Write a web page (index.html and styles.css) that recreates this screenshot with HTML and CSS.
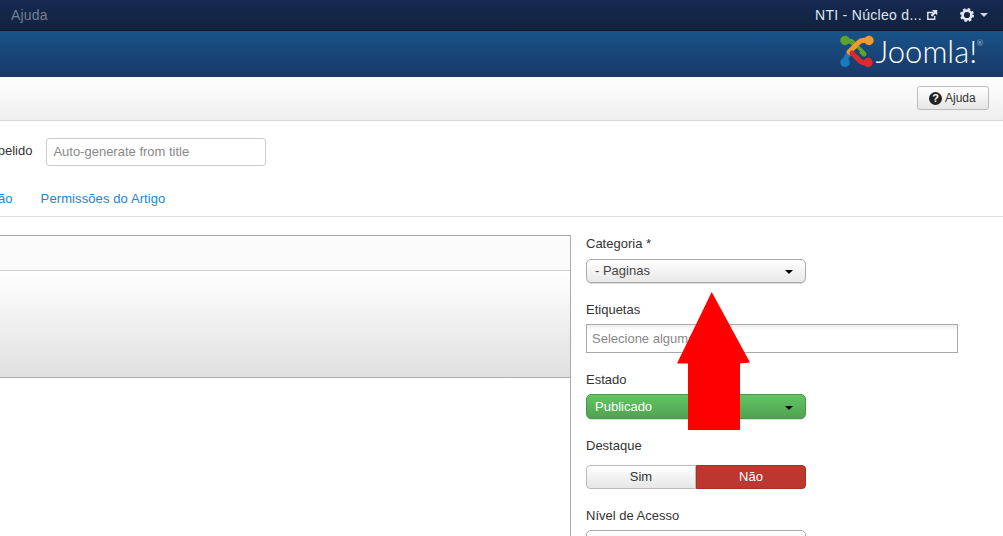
FILE: index.html
```html
<!DOCTYPE html>
<html lang="pt-br">
<head>
    <meta charset="UTF-8">
    <title>Editar Artigo</title>
    <link rel="stylesheet" href="styles.css">
</head>
<body>
    <div class="navbar">
        <a class="nav-help" href="#">Ajuda</a>
        <div class="nav-right">
            <a class="nav-site" href="#">NTI - Núcleo d...
                <svg class="ext-icon" viewBox="0 0 11 11" width="12" height="12">
                    <path d="M1 2.5h5.5v1.3H2.3v5h5V6.5h1.3V10H1z" fill="#dfe6ef"/>
                    <path d="M5.5 1h4.8v4.8L8.6 4.1 5.8 7 4.3 5.5l2.9-2.8z" fill="#dfe6ef"/>
                </svg>
            </a>
            <a class="nav-gear" href="#">
                <svg viewBox="0 0 14 14" width="14" height="14">
                    <circle cx="7" cy="7" r="4.4" fill="none" stroke="#e3e8ef" stroke-width="2.6"/>
                    <circle cx="7" cy="7" r="5.8" fill="none" stroke="#e3e8ef" stroke-width="2.4" stroke-dasharray="2.4 2.15"/>
                </svg>
                <span class="caret caret-light"></span>
            </a>
        </div>
    </div>

    <div class="header">
        <a class="logo" href="#">
            <svg viewBox="0 0 34 33" width="34" height="33">
                <g fill="none" stroke-width="5" stroke-linecap="round">
                    <path d="M5 28 Q5 22 10 18 L16 12" stroke="#1c78bd"/>
                    <path d="M5 6 Q11 5 14 9 L24 19" stroke="#5ea32b"/>
                    <path d="M29 6 Q22 4 18 8 L9 17" stroke="#f39a2b"/>
                    <path d="M28 27 Q22 29 19 25 L12 18" stroke="#e0282e"/>
                </g>
                <rect x="14.6" y="14.2" width="4.6" height="4.6" transform="rotate(45 16.9 16.5)" fill="#1a4679"/>
                <circle cx="5" cy="5.5" r="4.7" fill="#5ea32b"/>
                <circle cx="29" cy="5.5" r="4.7" fill="#f39a2b"/>
                <circle cx="28" cy="27.5" r="4.7" fill="#e0282e"/>
                <circle cx="5" cy="27.5" r="4.7" fill="#1c78bd"/>
            </svg>
            <span class="logo-text">Joomla!<sup>®</sup></span>
        </a>
    </div>

    <div class="subhead">
        <button class="btn-help"><span class="help-icon">?</span>Ajuda</button>
    </div>

    <div class="title-row">
        <label class="alias-label">Apelido</label>
        <input class="alias-input" type="text" placeholder="Auto-generate from title">
    </div>

    <ul class="tabs">
        <li><a href="#">Publicação</a></li>
        <li><a href="#">Permissões do Artigo</a></li>
    </ul>

    <div class="content">
        <div class="editor">
            <div class="editor-bar"></div>
            <div class="editor-body"></div>
        </div>
        <div class="side">
            <div class="field">
                <label>Categoria *</label>
                <div class="chosen">- Paginas<span class="caret"></span></div>
            </div>
            <div class="field">
                <label>Etiquetas</label>
                <input class="tags" type="text" placeholder="Selecione algumas">
            </div>
            <div class="field">
                <label>Estado</label>
                <div class="chosen chosen-green">Publicado<span class="caret"></span></div>
            </div>
            <div class="field">
                <label>Destaque</label>
                <div class="toggle">
                    <span class="toggle-off">Sim</span>
                    <span class="toggle-on">Não</span>
                </div>
            </div>
            <div class="field">
                <label>Nível de Acesso</label>
                <div class="chosen"></div>
            </div>
        </div>
    </div>

    <svg class="arrow" viewBox="0 0 73 138" width="73" height="138">
        <polygon points="34.7,0 73,70.5 63,71.5 63,138 11,138 11,71.5 0,71.5" fill="#ff0000"/>
    </svg>
</body>
</html>
```

FILE: styles.css
```css
html,body { margin: 0; padding: 0; height: 536px; overflow: hidden;}
body { position: relative; font-family: "Liberation Sans", Arial, sans-serif; font-size: 13px; color: #333; background: #fff;}
a { text-decoration: none;}
ul { margin: 0; padding: 0;}
li { list-style: none;}

.navbar {
    display: flex;
    justify-content: space-between;
    align-items: center;
    height: 30px;
    padding: 0 15px 0 11px;
    background: linear-gradient(#15294f, #12233f);
    border-bottom: 1px solid #0b1a30;
}
.nav-help { color: #727f95; font-size: 14px; letter-spacing: .2px;}
.nav-right { display: flex; align-items: center; gap: 22px;}
.nav-site { display: flex; align-items: center; gap: 4px; color: #dfe6ef; font-size: 14px; letter-spacing: .3px;}
.nav-gear { display: flex; align-items: center; gap: 6px;}
.caret {
    display: inline-block;
    width: 0;
    height: 0;
    border-top: 4px solid #000;
    border-left: 4px solid transparent;
    border-right: 4px solid transparent;
}
.caret-light { border-top-color: #cfd6e0;}

.header {
    display: flex;
    justify-content: flex-end;
    height: 46px;
    padding-right: 20px;
    background: linear-gradient(#175389, #1a3867);
}
.logo { display: flex; align-items: center; gap: 2px; height: 38px; margin-top: 1px;}
.logo-text { color: #fff; font-family: "Lato", sans-serif; font-weight: 300; font-size: 31px; line-height: 36px;}
.logo-text sup { font-size: 7px; vertical-align: 17px; line-height: 0;}

.subhead {
    display: flex;
    justify-content: flex-end;
    align-items: center;
    height: 43px;
    padding-right: 14px;
    background: linear-gradient(#fff, #eee);
    border-bottom: 1px solid #d4d4d4;
}
.btn-help {
    display: flex;
    align-items: center;
    gap: 3px;
    box-sizing: border-box;
    width: 72px;
    height: 24px;
    padding: 0 0 0 11px;
    margin-top: -1px;
    font-family: inherit;
    font-size: 12px;
    color: #333;
    background: linear-gradient(#fff, #e6e6e6);
    border: 1px solid #bbb;
    border-radius: 3px;
}
.help-icon {
    width: 13px;
    height: 13px;
    line-height: 13px;
    text-align: center;
    font-size: 11px;
    font-weight: bold;
    color: #fff;
    background: #222;
    border-radius: 50%;
}

.title-row { display: flex; align-items: center; gap: 14px; margin: 17px 0 0 -11px;}
.alias-label { font-size: 13px; color: #333; padding-bottom: 4px;}
.alias-input {
    box-sizing: border-box;
    width: 220px;
    height: 28px;
    padding: 0 6px 2px;
    font-family: inherit;
    font-size: 13px;
    border: 1px solid #ccc;
    border-radius: 3px;
}
.alias-input::placeholder, .tags::placeholder { color: #888; opacity: 1;}

.tabs {
    display: flex;
    gap: 28px;
    height: 50px;
    margin-left: -52px;
    border-bottom: 1px solid #ddd;
}
.tabs a { display: block; padding-top: 25px; color: #2384d3; font-size: 13px; letter-spacing: .1px;}

.content { display: flex; align-items: flex-start; margin-top: 18px;}
.editor {
    box-sizing: border-box;
    width: 571px;
    height: 301px;
    border-right: 1px solid #aaa;
}
.editor-bar { height: 34px; background: #fbfbfb; border-top: 1px solid #aaa; border-bottom: 1px solid #ccc;}
.editor-body { height: 106px; background: linear-gradient(#fff, #e0e0e0); border-bottom: 1px solid #aaa;}

.side { display: flex; flex-direction: column; gap: 17px; width: 372px; margin-left: 15px;}
.field label { display: block; height: 18px; line-height: 20px; margin-bottom: 6px; color: #333; font-size: 13px;}
.field:first-child label { line-height: 18px;}
.chosen {
    box-sizing: border-box;
    display: flex;
    justify-content: space-between;
    align-items: center;
    width: 220px;
    height: 24px;
    padding: 0 12px 1px 8px;
    color: #444;
    font-size: 13px;
    background: linear-gradient(#fff, #e8e8e8);
    border: 1px solid #aaa;
    border-radius: 5px;
    box-shadow: 0 1px 0 #ddd;
}
.chosen .caret { margin-top: 3px;}
.chosen-green {
    height: 25px;
    color: #fff;
    background: linear-gradient(#62c462, #51a351);
    border-color: #4a964a;
}
.tags {
    box-sizing: border-box;
    display: block;
    width: 372px;
    height: 29px;
    padding: 0 5px;
    font-family: inherit;
    font-size: 13px;
    border: 1px solid #aaa;
    background: linear-gradient(#eee, #fff 20%);
}
.toggle { display: flex; width: 220px; height: 24px; margin-top: 11px; line-height: 22px; text-align: center; font-size: 13px;}
.toggle-off {
    box-sizing: border-box;
    width: 110px;
    color: #333;
    background: linear-gradient(#fff, #e6e6e6);
    border: 1px solid #bbb;
    border-radius: 4px 0 0 4px;
}
.toggle-on {
    box-sizing: border-box;
    width: 110px;
    color: #fff;
    background: #bd362f;
    border: 1px solid #a9302a;
    border-radius: 0 4px 4px 0;
}

.arrow { position: absolute; left: 677px; top: 292px;}
```
